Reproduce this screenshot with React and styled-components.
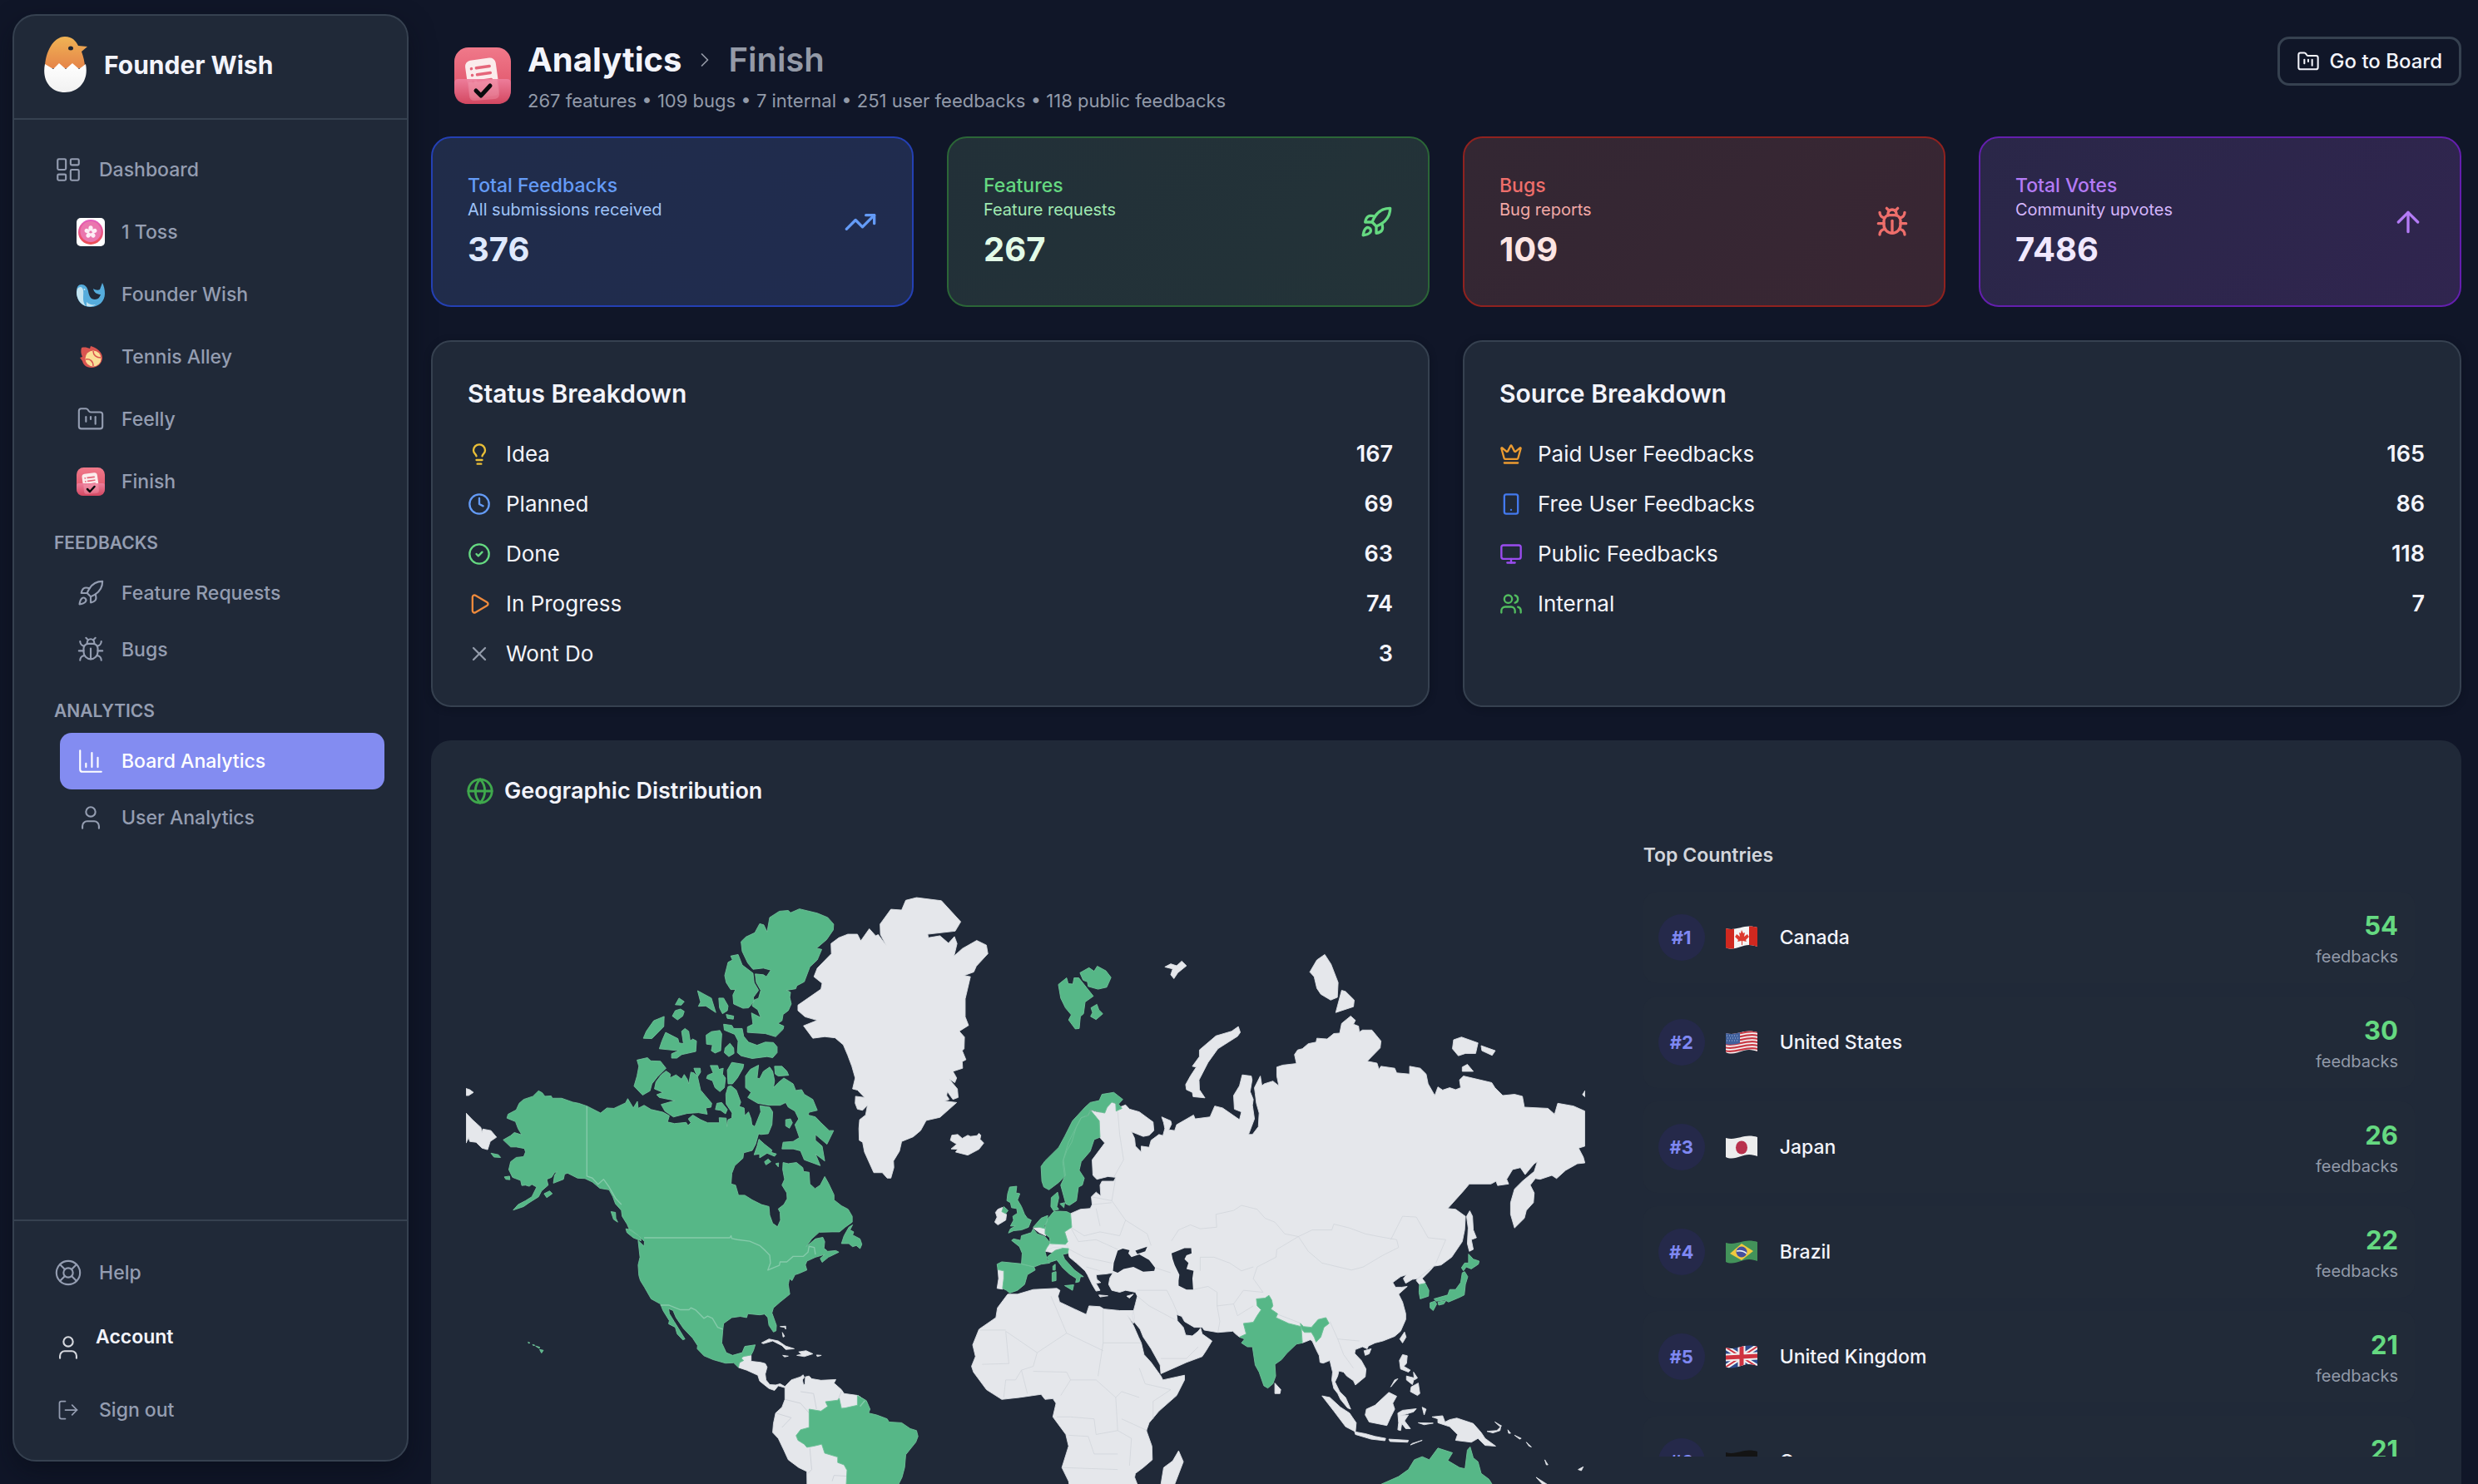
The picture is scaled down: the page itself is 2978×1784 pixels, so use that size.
import React from "react";
import styled, { createGlobalStyle } from "styled-components";
import {
  LayoutDashboard, FolderKanban, Rocket, Bug, ChartColumn, User, LifeBuoy, LogOut,
  ChevronRight, TrendingUp, ArrowUp, Lightbulb, Clock, CircleCheck, Play, X, Crown,
  Smartphone, Monitor, Users, Globe,
} from "lucide-react";

const Global = createGlobalStyle`
  *, *::before, *::after { box-sizing: border-box; }
  body {
    margin: 0;
    background: #101628;
    color: #f3f4fb;
    font-family: Inter, "Liberation Sans", sans-serif;
    font-size: 24px;
    overflow: hidden;
  }
  h1, h2, h3, p, ul, ol, dl, dd { margin: 0; padding: 0; }
  ul, ol { list-style: none; }
  a { color: inherit; text-decoration: none; }
  svg { display: block; flex: none; }
`;

/* ---------- shell ---------- */
const Shell = styled.div`
  display: flex;
  gap: 27px;
  height: 100vh;
  padding: 17px 20px 0 15px;
  overflow: hidden;
`;
const Sidebar = styled.aside`
  display: flex;
  flex-direction: column;
  flex: none;
  width: 476px;
  height: calc(100vh - 44px);
  border: 2px solid #364150;
  border-radius: 28px;
  background: #202938;
  box-shadow: 0 12px 30px rgba(8, 12, 22, 0.5);
`;
const Brand = styled.div`
  display: flex;
  align-items: center;
  gap: 18px;
  height: 125px;
  flex: none;
  padding: 0 0 5px 34px;
  border-bottom: 2px solid #364150;
  font-size: 30px;
  font-weight: 700;
`;
const Nav = styled.nav`
  flex: 1;
  padding: 26px 27px 0 28px;
`;
const NavList = styled.ul`
  display: flex;
  flex-direction: column;
  gap: ${(p) => (p.$tight ? 0 : 7)}px;
`;
const NavLink = styled.a`
  display: flex;
  align-items: center;
  gap: 20px;
  height: 68px;
  margin-left: ${(p) => (p.$sub ? 27 : 0)}px;
  padding-left: 20px;
  border-radius: 14px;
  font-weight: 500;
  font-size: 23px;
  color: ${(p) => (p.$active ? "#ffffff" : "#949db1")};
  background: ${(p) => (p.$active ? "#838cf1" : "transparent")};
`;
const IconSlot = styled.span`
  display: flex;
  align-items: center;
  justify-content: center;
  width: 34px;
  height: 34px;
  flex: none;
`;
const GroupLabel = styled.h3`
  margin: 27px 0 13px 20px;
  line-height: 26px;
  font-size: 21px;
  font-weight: 600;
  color: #949db1;
`;
const Footer = styled.div`
  flex: none;
  padding: 28px 27px 26px 28px;
  border-top: 2px solid #364150;
`;
const Account = styled.a`
  display: flex;
  align-items: center;
  gap: 16px;
  height: 97px;
  padding: 15px 0 0 20px;
  color: #d6d8de;
`;
const AccountName = styled.span`
  height: 58px;
  line-height: 32px;
  font-size: 23px;
  font-weight: 600;
  color: #f3f4fb;
`;

/* ---------- main ---------- */
const Main = styled.main`
  flex: 1;
  min-width: 0;
  display: flex;
  flex-direction: column;
  gap: 40px;
`;
const Header = styled.header`
  display: flex;
  align-items: flex-start;
  height: 107px;
  flex: none;
  padding: 27px 0 0 28px;
`;
const HeaderLogo = styled.div`
  padding-top: 13px;
  margin-right: 20px;
`;
const HeaderText = styled.div`
  flex: 1;
`;
const Crumbs = styled.h1`
  display: flex;
  align-items: center;
  gap: 14px;
  line-height: 56px;
  font-size: 40px;
  font-weight: 700;
`;
const CrumbCurrent = styled.span`
  font-weight: 600;
  color: #949aa7;
`;
const Summary = styled.p`
  line-height: 42px;
  font-size: 22px;
  color: #929aa9;
`;
const BoardButton = styled.button`
  display: flex;
  align-items: center;
  gap: 12px;
  height: 59px;
  padding: 0 20px;
  border: 3px solid #364150;
  border-radius: 14px;
  background: transparent;
  color: #f3f4fb;
  font: 500 24px Inter, "Liberation Sans", sans-serif;
`;
const StatGrid = styled.section`
  display: grid;
  grid-template-columns: repeat(4, 1fr);
  gap: 40px;
`;
const tones = {
  blue: { line: "#2440b4", from: "#202c49", to: "#202c50", title: "#649bf6", sub: "#9fc3f8", num: "#dfe9fd" },
  green: { line: "#2b6637", from: "#223038", to: "#233338", title: "#65d981", sub: "#a0eab2", num: "#e2fbe7" },
  red: { line: "#90221f", from: "#332733", to: "#392633", title: "#ee6e6b", sub: "#f2a9a6", num: "#fce5e3" },
  purple: { line: "#641fae", from: "#2a2748", to: "#30254f", title: "#b47bf6", sub: "#d4b5fb", num: "#f1e8fe" },
};
const StatCard = styled.article`
  display: flex;
  align-items: center;
  justify-content: space-between;
  height: 205px;
  padding: 0 42px;
  border: 2px solid ${(p) => tones[p.$tone].line};
  border-radius: 24px;
  background: linear-gradient(135deg, ${(p) => tones[p.$tone].from}, ${(p) => tones[p.$tone].to});
  color: ${(p) => tones[p.$tone].title};
`;
const StatText = styled.div`
  padding-top: 8px;
`;
const StatTitle = styled.h2`
  line-height: 32px;
  font-size: 23px;
  font-weight: 500;
`;
const StatSub = styled.p`
  line-height: 27px;
  font-size: 20px;
  color: ${(p) => tones[p.$tone].sub};
`;
const StatNumber = styled.p`
  line-height: 68px;
  font-size: 40px;
  font-weight: 700;
  color: ${(p) => tones[p.$tone].num};
`;
const TwoCol = styled.section`
  display: grid;
  grid-template-columns: repeat(2, 1fr);
  gap: 40px;
`;
const Panel = styled.article`
  padding: 42px;
  border: 2px solid #364150;
  border-radius: 24px;
  background: #202938;
  box-shadow: 0 2px 8px rgba(8, 12, 22, 0.4);
`;
const PanelTitle = styled.h2`
  line-height: 40px;
  margin-bottom: 33px;
  font-size: 30px;
  font-weight: 600;
`;
const Rows = styled.dl`
  display: flex;
  flex-direction: column;
  gap: 20px;
`;
const Row = styled.div`
  display: flex;
  align-items: center;
  gap: 18px;
  line-height: 40px;
  height: 40px;
  font-size: 27px;
  color: ${(p) => p.$color};
`;
const RowLabel = styled.dt`
  flex: 1;
  font-size: 26px;
  color: #f3f4fb;
`;
const RowValue = styled.dd`
  font-weight: 600;
  color: #f3f4fb;
`;
const GeoPanel = styled.section`
  flex: none;
  padding: 42px;
  border-radius: 24px;
  background: #202938;
`;
const GeoTitle = styled.h2`
  display: flex;
  align-items: center;
  gap: 12px;
  line-height: 38px;
  margin-bottom: 40px;
  font-size: 27px;
  font-weight: 600;
`;
const GeoGrid = styled.div`
  display: grid;
  grid-template-columns: 10fr 7fr;
  gap: 70px;
`;
const MapSvg = styled.svg`
  width: 100%;
  height: auto;
`;
const CountriesTitle = styled.h3`
  line-height: 36px;
  margin-bottom: 26px;
  font-size: 23px;
  font-weight: 600;
  color: #d2d5db;
`;
const CountryList = styled.ol`
  display: flex;
  flex-direction: column;
  gap: 16px;
  height: 679px;
  padding-right: 14px;
  overflow: hidden;
`;
const Country = styled.li`
  display: flex;
  align-items: center;
  flex: none;
  height: 110px;
  padding: 0 20px 0 18px;
  border-radius: 16px;
  background: #212a38;
`;
const Rank = styled.span`
  display: flex;
  align-items: center;
  justify-content: center;
  width: 56px;
  height: 56px;
  margin-right: 24px;
  border-radius: 50%;
  background: #25294a;
  font-size: 22px;
  font-weight: 700;
  color: #7f88f2;
`;
const CountryName = styled.span`
  flex: 1;
  margin-left: 26px;
  font-size: 23px;
  font-weight: 500;
`;
const Tally = styled.span`
  display: flex;
  flex-direction: column;
  padding-top: 6px;
  text-align: right;
`;
const TallyNumber = styled.strong`
  line-height: 40px;
  font-size: 31px;
  font-weight: 700;
  color: #65d981;
`;
const TallyUnit = styled.span`
  line-height: 34px;
  font-size: 20px;
  color: #929aa9;
`;

/* ---------- logos ---------- */
const EggLogo = () => (
  <svg width="56" height="70" viewBox="0 0 56 70" aria-hidden="true">
    <defs>
      <linearGradient id="chick" x1="0" y1="0" x2="0" y2="1">
        <stop offset="0" stopColor="#f0b354" />
        <stop offset="1" stopColor="#e5854a" />
      </linearGradient>
      <linearGradient id="shell" x1="0" y1="0" x2="0" y2="1">
        <stop offset="0" stopColor="#ffffff" />
        <stop offset="1" stopColor="#f1f1f1" />
      </linearGradient>
    </defs>
    <path d="M27 1C36 1 40 6 43 12l11 1-7 6c2 6 4 12 4 20H3C3 20 13 1 27 1Z" fill="url(#chick)" />
    <path d="M3 34l10 6 7-7 8 7 8-7 8 7 8-6c4 20-8 34-25 34S-1 54 3 34Z" fill="url(#shell)" />
    <ellipse cx="34" cy="15" rx="3" ry="2.5" fill="#1f2430" />
  </svg>
);
const FinishLogo = ({ size }) => (
  <svg width={size} height={size} viewBox="0 0 68 68" aria-hidden="true">
    <defs>
      <linearGradient id="fin" x1="0" y1="0" x2="0" y2="1">
        <stop offset="0" stopColor="#f0798a" />
        <stop offset="1" stopColor="#dc4c63" />
      </linearGradient>
      <linearGradient id="pocket" x1="0" y1="0" x2="0" y2="1">
        <stop offset="0" stopColor="#ee7f9d" />
        <stop offset="1" stopColor="#d24760" />
      </linearGradient>
    </defs>
    <rect width="68" height="68" rx="17" fill="url(#fin)" />
    <g transform="rotate(-8 33 36)">
      <rect x="15" y="14" width="37" height="46" rx="7" fill="#fbecec" />
      <g stroke="#e5667a" strokeWidth="3.500" strokeLinecap="round">
        <path d="M22 24h.1M28 24h16M22 32h.1M28 32h16M22 40h.1M28 40h16" />
      </g>
    </g>
    <path d="M0 43q0-5 5-5h58q5 0 5 5v8q0 17-17 17H17Q0 68 0 51Z" fill="url(#pocket)" opacity="0.93" />
    <path d="M17 42l34-4 3 18q0 5-5 6l-25 2q-5 0-6-5Z" fill="#f5a3b6" opacity="0.35" />
    <path d="M26 52l6 6 11-12" fill="none" stroke="#0b0b0d" strokeWidth="5" strokeLinecap="round" strokeLinejoin="round" />
  </svg>
);
const TossLogo = () => (
  <svg width="34" height="34" viewBox="0 0 34 34" aria-hidden="true">
    <defs>
      <linearGradient id="toss" x1="0" y1="0" x2="0" y2="1">
        <stop offset="0" stopColor="#e35fc0" />
        <stop offset="1" stopColor="#ef4d50" />
      </linearGradient>
    </defs>
    <rect width="34" height="34" rx="5" fill="#fff" />
    <circle cx="17" cy="17" r="15" fill="url(#toss)" />
    <circle cx="17" cy="16.500" r="12.500" fill="#ea76ae" />
    <g fill="#fdeef6">
      {[0, 72, 144, 216, 288].map((a) => (
        <ellipse key={a} cx="17" cy="12.500" rx="2.600" ry="3.200" transform={`rotate(${a} 17 17)`} />
      ))}
    </g>
    <circle cx="17" cy="17" r="1.300" fill="#ea76ae" />
  </svg>
);
const WhaleLogo = () => (
  <svg width="34" height="34" viewBox="0 0 34 34" aria-hidden="true">
    <path d="M6 5c4 0 7 3 8 8 1 6 3 10 8 10 4 0 6-3 7-6-4 0-8-2-9-7 3 2 6 2 8 1 1-3 2-5 3-8 2 4 3 8 3 13 0 9-7 16-17 16C7 32 0 25 0 14 0 8 2 5 6 5Z" fill="#55acdc" />
    <path d="M1 10c3-3 6-3 7 2 1 6-2 12 3 19C4 28 0 22 0 14ZM12 26c3 3 7 4 11 3-2 2-6 3-11 2Z" fill="#c4e4f0" />
    <circle cx="9.500" cy="11" r="1" fill="#c4e4f0" />
  </svg>
);
const TennisLogo = () => (
  <svg width="34" height="34" viewBox="0 0 34 34" aria-hidden="true">
    <path d="M6 6c4-1 7 0 10 1l1-3c8 2 14 8 14 14 0 7-6 12-13 12S8 26 7 22l-3-4 3-1C5 13 5 9 6 6Z" fill="#da5550" />
    <circle cx="20" cy="19" r="9.500" fill="#fbdf97" />
    <path d="M20 10c0 5 4 8 9 8M11 20c5-1 9 2 9 8" fill="none" stroke="#da5550" strokeWidth="1.500" />
  </svg>
);

/* ---------- flags ---------- */
const flagArt = {
  ca: (
    <>
      <path fill="#f4f4f4" d="M0 0h40v30H0z" />
      <path fill="#d0281f" d="M0 0h11v30H0zM29 0h11v30H29z" />
      <path fill="#dd3a2e" d="M20 5l2 4 2-1-1 5 4-3 1 2 1 1-4 4 1 2-5-1v5h-1v-5l-5 1 1-2-4-4 1-1 1-2 4 3-1-5 2 1z" />
    </>
  ),
  us: (
    <>
      <path fill="#f4f4f4" d="M0 0h40v30H0z" />
      <path fill="none" stroke="#c93a45" strokeWidth="2.200" d="M0 4c13 4 24-6 40-2M0 8c13 4 24-6 40-2M0 12c13 4 24-6 40-2M0 16c13 4 24-6 40-2M0 20c13 4 24-6 40-2M0 24c13 4 24-6 40-2M0 28c13 4 24-6 40-2" />
      <path fill="#40609c" d="M0 2c7 2 12 1 18-1v14c-6 2-11 2-18 1z" />
      <path stroke="#a9b9d8" strokeWidth="1" strokeDasharray="1 2" d="M2 6h15M3 9h14M2 12h15" />
    </>
  ),
  jp: (
    <>
      <path fill="#ededed" d="M0 0h40v30H0z" />
      <ellipse cx="20" cy="14.500" rx="7" ry="8" fill="#b8314c" />
    </>
  ),
  br: (
    <>
      <path fill="#43935a" d="M0 0h40v30H0z" />
      <path fill="#f0c93f" d="M6 16L20 4l14 9-14 11z" />
      <circle cx="20" cy="14" r="6.500" fill="#464f9e" />
      <path d="M14 13c5-1 9 0 12 3" fill="none" stroke="#e8ecf0" strokeWidth="1.500" />
    </>
  ),
  gb: (
    <>
      <path fill="#2d4a8c" d="M0 0h40v30H0z" />
      <path stroke="#f1f1f1" strokeWidth="6" d="M0 2l40 25M0 27L40 1" />
      <path stroke="#cf3340" strokeWidth="2" d="M0 2l40 25M0 27L40 1" />
      <path stroke="#f1f1f1" strokeWidth="9" d="M20 0v30M0 15l40-2" />
      <path stroke="#cf3340" strokeWidth="5" d="M20 0v30M0 15l40-2" />
    </>
  ),
  de: (
    <>
      <path fill="#141414" d="M0 0h40v11H0z" />
      <path fill="#cf2b2b" d="M0 11h40v9H0z" />
      <path fill="#f0c93f" d="M0 20h40v10H0z" />
    </>
  ),
};
const Flag = ({ code }) => (
  <svg width="40" height="28" viewBox="0 0 40 28" role="img" aria-label={code}>
    <clipPath id={`wave-${code}`}>
      <path d="M1 3C12 6 20 .5 29 .5c4 0 7 .5 10 1.500V25c-3-1-6-2-10-2-8 0-13 4.500-21 4.500-3 0-5-.5-7-1.500Z" />
    </clipPath>
    <g clipPath={`url(#wave-${code})`}>{flagArt[code]}</g>
  </svg>
);

/* ---------- world map: west and east sheets share one canvas ---------- */
const westLand = `
M1228,69L1257,62 1324,70 1376,124 1361,148 1287,156 1289,165 1320,160 1343,179 1359,162 1366,180 1358,212 1380,193 1419,172 1445,184 1449,206 1418,238 1411,253 1385,262 1402,265 1388,322 1388,368 1397,390 1372,405 1386,420 1385,450 1380,455 1390,478 1380,483 1381,500 1355,508 1365,525 1360,537 1345,528 1367,553 1369,575 1355,580 1340,560 1338,570 1345,580 1332,584 1365,588 1345,605 1320,626 1283,634 1268,660 1248,676 1217,688 1211,713 1195,738 1196,755 1188,782 1178,782 1165,768 1142,768 1117,715 1112,690 1103,685 1102,655 1104,632 1120,620 1125,595 1112,608 1098,605 1092,590 1093,572 1117,575 1098,556 1085,553 1092,525 1083,495 1072,467 1060,440 1038,422 1010,419 978,423 953,391 990,377 957,368 938,352 938,338 1000,297 1003,282 981,265 990,243 1028,206 1027,180 1048,165 1072,156 1098,156 1107,173 1130,142 1147,160 1154,157 1175,184 1160,157 1159,130 1188,92 1217,94Z
M1352,672L1368,670 1380,680 1395,672 1402,675 1420,673 1425,667 1430,672 1428,682 1438,692 1425,708 1395,723 1362,715 1368,708 1350,707 1365,695 1348,685Z
M45,615L62,632 85,652 88,665 90,656 112,660 127,677 110,688 103,709 88,705 72,690 55,688 52,678 45,692Z
M45,552L55,555 65,562 52,570 45,570Z
M786,1243L793,1240 812,1237 812,1252 838,1255 850,1258 855,1267 850,1285 852,1300 862,1312 878,1313 890,1310 903,1317 920,1300 945,1292 952,1287 955,1293 950,1300 953,1313 957,1310 958,1292 968,1290 975,1297 1000,1301 1040,1299 1035,1308 1055,1325 1062,1335 1100,1340 1122,1355 1130,1400 1068,1500 1080,1620 963,1620 962,1535 940,1525 912,1505 900,1480 885,1450 870,1435 872,1412 878,1385 895,1370 903,1350 903,1320 885,1315 875,1327 860,1322 835,1303 830,1288 800,1275 778,1268Z
M840,1205L860,1195 885,1200 905,1213 928,1220 905,1222 895,1212 870,1200 845,1207Z
M940,1228L960,1225 978,1233 955,1240 935,1237 948,1234Z
M897,1237L912,1239 902,1241Z M988,1236L1001,1237 990,1240Z
M890,1163L905,1162 905,1170 902,1165Z M896,1178L902,1188 898,1190Z`;
const westActive = `
M240,558L250,563 257,572 274,571 277,577 302,577 332,587 348,590 370,597 407,615 424,602 443,603 474,589 480,578 495,602 506,585 508,603 524,595 543,606 575,613 592,622 587,638 606,642 637,639 642,647 650,640 643,630 655,620 676,632 695,640 727,640 726,627 745,628 747,650 750,632 760,628 761,615 745,592 744,567 750,547 758,545 772,556 784,587 780,598 793,602 795,622 805,612 812,630 814,645 822,650 838,612 836,596 862,600 870,612 868,645 858,668 838,670 832,668 824,695 815,711 792,717 790,731 768,750 760,770 758,797 770,800 778,826 795,826 815,838 840,850 860,855 862,877 870,898 883,907 891,890 890,870 885,861 900,850 909,835 908,820 895,800 902,785 897,760 898,742 912,745 934,742 951,755 953,765 968,767 970,797 984,809 998,800 1010,778 1020,795 1035,825 1035,838 1055,853 1073,862 1084,880 1084,895 1065,908 1050,920 1030,920 995,921 975,938 960,958 985,938 1005,934 1010,945 1008,962 1018,970 1040,968 1048,972 1020,985 1003,998 998,988 1010,978 985,985 962,995 958,1005 962,1018 940,1027 930,1030 922,1045 915,1040 912,1055 916,1080 890,1100 872,1115 868,1128 880,1160 879,1174 872,1177 860,1160 857,1140 848,1131 835,1133 803,1130 800,1140 783,1137 760,1140 738,1155 736,1170 733,1205 745,1230 762,1237 788,1230 795,1214 823,1210 818,1225 812,1236 790,1240 786,1245 792,1250 780,1256 778,1268 765,1256 743,1257 710,1248 685,1238 667,1220 668,1212 655,1193 630,1168 610,1140 602,1122 590,1117 592,1130 605,1150 618,1170 634,1195 628,1197 613,1182 608,1165 590,1156 592,1148 575,1122 568,1105 543,1092 525,1062 514,1045 510,1032 508,1005 513,985 508,942 524,957 525,945 510,930 485,915 478,900 465,880 463,865 447,848 440,830 430,812 405,808 385,792 365,783 345,782 318,769 310,772 307,785 280,795 283,775 290,765 283,768 275,780 262,785 266,800 248,815 240,830 215,845 200,855 172,864 185,850 205,840 222,830 235,805 222,798 215,803 205,800 195,801 192,788 170,780 160,760 165,740 180,729 200,727 205,715 202,706 180,702 165,702 145,684 165,673 175,665 195,671 185,655 178,637 155,628 158,618 180,607 188,590 200,580 225,572Z
M1085,902L1078,915 1088,920 1085,928 1105,938 1110,952 1105,963 1095,955 1085,958 1075,950 1055,950 1062,930 1075,908Z
M785,175L798,163 822,152 835,129 846,132 855,150 862,113 888,97 912,95 918,101 942,91 990,102 1018,113 1034,130 1033,145 1015,170 988,192 1002,195 990,222 970,240 955,278 935,288 932,296 907,300 918,305 916,318 920,335 912,352 898,362 895,378 884,385 900,392 898,400 878,419 850,411 802,408 802,394 817,387 813,358 838,370 830,350 815,340 820,325 832,320 838,300 826,280 823,258 845,260 853,265 865,248 845,243 817,246 803,230 788,200Z
M757,212L777,208 788,235 817,256 820,280 832,300 818,318 820,328 805,345 790,346 765,335 763,312 770,298 757,298 745,280 741,262 750,228 762,222Z
M668,301L705,320 717,357 690,340 670,341 676,330Z
M725,320L738,320 750,340 748,352 735,360 727,345Z
M745,362L765,366 764,374 748,372Z
M618,320L632,329 624,338 608,337Z
M608,352L622,348 632,354 628,366 614,376 600,366Z
M578,367L577,393 545,424 522,423 530,405 550,378Z
M582,408L615,424 618,435 630,437 625,405 634,398 644,405 648,430 655,425 665,430 663,457 625,465 612,474 598,474 598,463 617,455 565,450 572,430Z
M705,406L728,403 733,412 730,455 715,461 705,455 708,440 692,438 691,415Z
M738,387L760,390 765,398 788,398 792,418 805,433 828,441 850,433 872,434 882,445 882,460 870,473 855,470 815,475 785,468 775,460 777,430 768,413 740,402Z
M755,436L765,448 766,462 752,470 740,460 742,448Z
M505,479L533,473 542,481 568,482 583,500 560,522 545,540 540,558 520,569 497,546 505,520 510,495Z
M583,507L595,515 593,525 610,517 625,528 632,516 640,528 644,540 650,510 658,512 668,522 676,556 690,572 706,590 704,600 690,602 694,618 670,614 640,616 603,625 580,610 570,593 607,583 565,575 558,568 575,562 552,553 556,535 570,517Z
M658,500L675,500 676,510 668,522 662,510Z
M702,493L722,493 725,503 737,500 735,515 743,525 740,550 728,560 715,550 708,532 692,526 695,518 710,512Z
M760,485L792,490 790,500 775,525 762,540 750,540 748,505Z
M720,590L733,588 748,606 743,617 730,608 716,606Z
M797,520L810,503 832,492 828,525 835,527 845,508 862,497 870,508 875,532 872,550 885,537 900,525 925,540 932,557 948,555 955,567 978,580 990,608 968,613 965,620 985,625 1000,640 1022,660 1034,660 1016,695 985,670 985,685 1003,700 1010,738 985,720 998,750 955,735 945,712 925,707 895,707 898,690 925,688 942,678 930,645 940,630 930,610 912,600 905,588 890,595 860,595 830,590 803,575 812,562 797,550Z
M875,495L895,495 908,507 913,518 885,520 877,515Z
M905,632L918,630 923,640 915,654 905,648Z
M833,682L848,695 868,710 866,716 880,720 875,726 855,718 835,730 835,720 820,722 828,700Z
M848,740L858,733 865,740 852,748Z M878,745L886,743 885,753Z
M112,718L132,722 138,729 120,728Z M148,779L162,777 163,786 152,785Z M255,822L270,815 277,822 262,832Z
M475,912L490,915 515,935 516,943 495,935 478,922Z M435,868L447,870 448,885 453,895 442,888Z
M243,1222L253,1224 248,1231Z M232,1213L243,1216 242,1219Z M224,1209L230,1211 226,1212Z M212,1203L217,1205 213,1206Z
M968,1375L1000,1380 1018,1368 1012,1356 1045,1352 1049,1347 1055,1373 1065,1372 1098,1365 1098,1340 1122,1353 1132,1375 1128,1385 1150,1390 1178,1400 1183,1408 1217,1410 1240,1425 1257,1430 1261,1445 1255,1460 1228,1492 1225,1525 1218,1550 1205,1575 1180,1620 1075,1620 1068,1568 1070,1532 1062,1518 1045,1512 1045,1498 1010,1488 1002,1465 980,1470 962,1473 955,1465 938,1455 933,1443 945,1428 968,1422Z`;
const westBorders = `
M370,597L370,777 385,782 400,798 415,785 430,805 448,835 463,850
M524,935L755,935 758,930 760,937 775,940 808,944 835,955 850,968 862,980 864,1000 857,1018 888,1006 890,997 908,997 925,983 952,983 965,972 968,957 982,960 985,978
M568,1108L590,1108 622,1120 645,1120 650,1115 662,1120 685,1142 695,1136 708,1142 722,1165 736,1170
M1105,1368L1118,1353`;
const westFaint = `
M903,1350L945,1360 968,1385 M878,1385L920,1397 895,1422 M945,1330L980,1335 988,1375 M1055,1330L1045,1352 M970,1475L975,1530 965,1540 M1030,1560L1035,1545 1068,1547`;

const eastLand = `
M276,608L290,612 312,615 318,600 330,587 340,592 341,610 350,600 365,594 375,605 400,612 435,638 437,660 425,672 410,675 380,663 388,680 390,700 405,715 405,700 425,703 430,685 450,670 460,673 465,655 462,640 457,625 480,635 482,643 475,658 490,660 495,645 538,620 542,630 580,625 592,597 612,602 655,632 660,612 642,605 640,570 655,545 662,517 685,520 687,530 682,560 690,580 688,595 693,630 678,670 688,670 703,650 705,615 698,590 695,565 693,550 708,520 712,545 718,540 740,533 755,545 750,520 750,497 765,492 800,488 795,465 803,453 815,450 830,437 850,433 852,423 878,425 895,411 910,410 915,385 938,366 950,377 945,387 958,392 960,407 968,402 992,402 1015,430 1013,448 980,482 1005,487 1010,503 1015,495 1050,500 1055,512 1088,515 1088,495 1115,500 1130,515 1135,540 1152,570 1160,548 1172,556 1190,550 1205,555 1218,550 1215,530 1225,520 1297,537 1305,550 1325,570 1355,567 1375,572 1380,600 1440,603 1457,618 1465,590 1505,597 1534,610 1534,700 1518,705 1530,728 1534,743 1515,745 1485,762 1462,783 1450,775 1420,785 1408,783 1395,800 1405,820 1403,845 1385,865 1380,885 1355,910 1345,875 1345,845 1355,810 1375,790 1405,765 1413,740 1405,745 1382,773 1370,755 1350,760 1335,785 1340,797 1312,801 1308,790 1295,797 1240,797 1225,815 1185,860 1205,862 1230,880 1228,915 1222,945 1195,985 1168,1005 1150,1008 1140,1020 1120,1040 1128,1050 1120,1060 1113,1055 1105,1045 1108,1040 1095,1042 1078,1052 1072,1040 1080,1030 1065,1035 1045,1050 1052,1062 1068,1062 1082,1060 1060,1080 1070,1100 1078,1130 1078,1145 1065,1175 1050,1188 1020,1200 1000,1205 983,1213 980,1220 968,1215 950,1222 948,1232 965,1250 977,1272 975,1292 950,1313 945,1302 928,1290 920,1280 908,1277 905,1290 898,1305 910,1330 925,1345 938,1375 930,1372 912,1350 905,1335 895,1322 890,1300 892,1280 885,1250 868,1257 860,1255 858,1238 850,1222 840,1200 835,1197 815,1205 800,1200 760,1190 700,1190 655,1190 645,1182 638,1175 600,1178 565,1172 560,1165 540,1165 515,1150 508,1137 495,1132 497,1148 512,1165 518,1185 535,1187 550,1175 556,1167 560,1182 585,1200 570,1225 560,1240 520,1255 455,1284 453,1262 430,1220 410,1190 402,1170 386,1150 382,1135 390,1105 395,1085 390,1075 365,1070 350,1075 330,1070 322,1055 325,1038 333,1025 315,1028 290,1030 292,1042 302,1050 290,1052 300,1070 290,1072 280,1055 268,1030 262,1020 240,1000 222,985 218,968 205,960 180,960 160,970 160,958 173,945 212,950 215,935 210,918 225,908 225,873 250,862 275,860 280,850 278,830 290,818 302,828 300,800 305,790 335,790 340,780 320,778 292,785 282,775 280,735 312,692 300,678 298,635Z
M652,393L657,408 650,418 600,450 575,485 552,530 553,555 567,576 537,573 535,562 520,555 518,542 530,520 545,497 535,495 553,470 553,453 595,417 635,405Z
M465,240L480,232 495,237 508,225 520,237 498,255 488,270 480,260 485,245Z
M872,208L888,233 906,280 904,318 887,325 862,310 852,295 845,265 834,253 852,222Z
M915,300L925,303 947,325 945,342 900,357Z
M1200,427L1220,420 1262,435 1256,462 1230,462 1212,468 1197,450Z M1270,442L1306,455 1298,467 1272,455Z M1222,497L1235,490 1250,508 1222,508Z
M1241,866L1248,880 1250,915 1258,935 1245,940 1250,965 1240,970 1235,950 1237,910 1233,880Z
M1534,558L1528,568 1534,573Z
M40,1015L58,1018 52,1067 38,1065 42,1040Z
M40,862L52,857 50,868 62,875 60,890 40,902 32,895 38,882 34,870Z
M130,910L158,908 162,930 145,922Z
M160,958L185,952 215,953 220,962 190,965 178,973 162,970Z
M65,1080L90,1080 130,1068 190,1065 198,1070 193,1085 197,1100 235,1118 265,1132 272,1110 300,1112 310,1118 350,1122 385,1122 388,1140 385,1155 370,1135 385,1160 398,1190 405,1205 412,1235 430,1255 455,1290 460,1300 515,1288 515,1300 495,1340 450,1380 425,1410 418,1430 432,1470 433,1505 410,1525 390,1540 388,1550 395,1568 395,1620 230,1620 220,1560 203,1525 220,1470 213,1440 180,1395 188,1360 180,1348 160,1350 150,1337 95,1345 50,1350 11,1325 -22,1280 -27,1265 -17,1240 -24,1210 -8,1170 35,1140 39,1115Z
M500,1482L512,1510 490,1568 485,1620 455,1600 455,1568 462,1525 485,1508Z
M368,1085L385,1080 375,1090Z M297,1082L320,1084 300,1087Z
M745,1308L760,1325 758,1335 745,1335Z
M972,1225L990,1220 985,1233 975,1237Z M1075,1177L1079,1190 1070,1205 1063,1195Z
M1070,1235L1082,1238 1080,1258 1073,1265 1090,1275 1085,1280 1065,1272 1062,1250Z M1098,1280L1108,1295 1100,1300Z M1110,1308L1114,1335 1108,1340 1090,1330 1092,1318Z M1058,1297L1040,1318 1050,1300Z M1080,1290L1100,1295 1095,1312 1080,1300Z
M865,1341L885,1345 912,1370 935,1385 952,1410 950,1433 925,1420 895,1380Z
M948,1433L975,1438 1000,1445 1027,1450 1025,1456 990,1452 950,1440Z M1035,1452L1085,1455 1083,1460 1038,1458Z M1090,1467L1120,1455 1095,1463Z
M978,1375L1000,1365 1035,1332 1055,1342 1045,1360 1050,1375 1040,1395 1030,1417 985,1408 975,1390Z
M1058,1385L1070,1378 1105,1374 1098,1382 1065,1392 1085,1390 1075,1405 1090,1425 1078,1425 1068,1412 1065,1430 1058,1428 1060,1410Z
M1120,1370L1130,1375 1125,1390Z M1110,1410L1148,1411 1125,1415Z
M1145,1395L1172,1392 1178,1408 1190,1402 1208,1398 1250,1412 1270,1435 1280,1450 1307,1470 1280,1468 1262,1450 1245,1460 1205,1455 1210,1440 1190,1420 1160,1410 1160,1400Z
M1285,1432L1310,1430 1320,1420 1318,1430 1300,1436Z M1305,1408L1322,1418 1318,1420Z M1338,1428L1345,1437 1340,1437Z M1355,1442L1372,1450 1368,1452Z M1385,1460L1398,1472 1392,1470Z
M1432,1505L1440,1518 1436,1518Z M1410,1550L1438,1568 1430,1572Z M1517,1530L1530,1523 1525,1533Z`;
const seas = `
M345,968L358,963 375,967 372,975 380,985 400,978 425,992 440,1012 438,1020 410,1022 385,1010 360,1015 345,1025 333,1020 335,1000Z
M390,968L420,958 415,970 395,977Z
M482,975L515,962 532,962 533,975 520,980 515,990 525,1000 520,1015 538,1020 535,1040 537,1068 520,1068 500,1058 500,1045 502,1030 490,1005 485,990Z`;
const eastActive = `
M194,285L215,268 219,283 231,284 234,268 246,268 283,315 262,330 258,360 250,367 247,398 237,399 220,376 227,363 212,345 200,320Z
M249,255L272,242 285,251 293,238 315,250 328,267 317,292 295,297 270,290 268,278 257,274Z
M277,345L292,336 297,350 307,360 290,375 276,367 281,357Z
M305,567L335,562 358,580 347,592 356,603 341,610 340,590 330,587 318,600 312,615 290,610 275,606 270,620 252,627 240,650 228,690 215,712 207,735 212,775 195,793 170,812 157,805 152,790 150,752 160,738 195,703 210,675 230,635 262,600 275,588 298,583Z
M276,608L298,635 300,677 285,683 275,713 252,740 247,762 260,782 255,800 245,805 240,840 222,852 213,848 200,800 210,778 205,740 213,712 220,690 240,650 252,627 270,622Z
M192,818L195,832 190,855 195,862 182,866 175,855 176,832Z M198,848L210,845 208,858Z
M182,868L195,867 215,868 225,873 228,908 210,920 218,945 212,952 173,950 172,935 160,925 162,900 168,885Z
M150,885L167,878 165,895 158,905 162,912 145,908 130,908Z
M130,912L140,925 160,932 173,948 165,960 160,970 165,990 172,1000 150,1003 132,1010 100,1003 102,975 95,958 75,942 80,938 98,942 100,930 125,922Z
M38,1003L50,997 100,1002 132,1010 135,1018 115,1030 108,1055 90,1070 70,1077 62,1070 52,1065 55,1040 55,1020 40,1017Z
M165,985L185,968 205,962 220,963 218,975 205,978 210,990 235,1018 258,1035 250,1035 247,1048 238,1050 240,1040 222,1028 205,1012 190,992 172,998Z M210,1058L233,1056 230,1070Z M178,1025L188,1022 188,1045 178,1047Z M180,1008L186,1003 186,1018 180,1018Z
M70,805L88,803 86,820 96,822 90,838 100,855 108,875 115,885 125,890 118,908 100,915 80,917 67,923 72,912 85,905 72,905 80,890 78,880 90,872 88,860 75,858 72,845 63,840 65,822Z
M55,855L66,865 60,873 50,868Z
M698,1092L720,1090 730,1083 737,1095 740,1110 735,1118 752,1130 748,1140 780,1155 812,1163 815,1205 800,1208 775,1232 762,1248 745,1260 747,1290 740,1310 727,1321 717,1315 705,1280 695,1262 688,1215 675,1215 660,1205 668,1195 655,1190 672,1182 665,1155 690,1152 700,1135 710,1120 700,1110Z
M810,1155L818,1163 838,1165 855,1145 875,1140 883,1155 870,1165 862,1190 850,1203 845,1190 838,1178 820,1178 812,1168Z
M1113,1055L1128,1052 1137,1070 1136,1085 1115,1092 1112,1075Z
M1238,977L1250,990 1265,995 1263,1003 1245,1015 1232,1010 1225,1020 1220,1012 1228,1000 1238,1000Z
M1228,1022L1236,1035 1230,1055 1227,1082 1215,1088 1187,1100 1178,1095 1155,1098 1150,1092 1185,1082 1190,1068 1205,1068 1218,1050 1222,1025Z
M1140,1102L1152,1098 1157,1105 1148,1122 1140,1115Z M1160,1100L1180,1097 1175,1105 1162,1108Z
M1015,1568L1060,1548 1085,1530 1100,1505 1120,1497 1138,1505 1160,1475 1197,1487 1185,1507 1215,1525 1229,1528 1235,1480 1242,1472 1250,1500 1262,1510 1270,1540 1290,1555 1298,1568 1298,1620 1015,1620Z`;
const eastFaint = `
M482,943L500,915 530,902 555,912 597,908 595,875 640,865 660,852 700,862 720,885 745,895 770,925 805,932 840,915 890,915 895,900 935,910 975,925 1010,932 1055,940 1060,960 1020,980 970,1010 940,1018 865,1000 830,970 805,932 750,965 748,985 700,1010 690,1040 715,1075
M1040,940L1070,880 1105,882 1135,935 1180,940 1155,1000 M345,610L350,670 360,735 335,780 M555,1020L555,985 590,985 630,1000 660,1020 690,1010
M537,1068L575,1060 598,1075 598,1110 605,1150 600,1178 M598,1110L640,1105 665,1070 715,1075 M640,1105L650,1135 690,1110
M60,1175L140,1230 215,1180 190,1120 175,1085 M308,1118L308,1205 405,1205 M308,1205L295,1290 M215,1180L308,1225 M-8,1172L60,1172 M60,1175L68,1258 0,1260
M140,1230L130,1265 100,1275 85,1300 60,1300 55,1345 M100,1275L115,1335 M130,1278L215,1280 225,1300 200,1340 M225,1300L290,1300 340,1345 355,1330 400,1345 M340,1345L345,1430 290,1440 285,1400 225,1395 190,1395
M400,1270L415,1310 480,1325 435,1355 435,1400 M220,1442L270,1445 285,1490 345,1490 M205,1525L345,1530 M355,1400L420,1430 M345,1430L380,1450 375,1520
M225,873L225,908 260,930 300,920 350,930 365,890 420,925 430,955 M225,908L245,945 290,940 345,965 M290,860L300,905 M340,780L330,840 365,890 M222,965L260,985 330,1000 M265,1010L300,1020
M440,1012L480,1025 M395,1070L470,1070 485,1100 500,1135 M395,1085L425,1110 490,1145 M455,1245L520,1245 550,1215 M885,1150L905,1195 960,1200 M905,1195L920,1235 945,1270 M748,1130L812,1155
M1108,1040L1150,1008 M278,830L330,840 M280,850L330,845`;

const WorldMap = () => (
  <MapSvg viewBox="0 0 1344 820" role="img" aria-label="Feedback by country">
    <g strokeWidth="2" strokeLinejoin="round">
      <g transform="translate(-20 40) scale(0.446429 0.468113)">
        <path d={westLand} fill="#e5e7eb" stroke="#dcdfe4" />
        <path d={westFaint} fill="none" stroke="#cdd1d8" />
        <path d={westActive} fill="#56b787" stroke="#6ec198" />
        <path d={westBorders} fill="none" stroke="#86cbab" strokeWidth="3" />
      </g>
      <g transform="translate(620 40) scale(0.471939 0.468112)">
        <path d={eastLand} fill="#e5e7eb" stroke="#dcdfe4" />
        <path d={eastFaint} fill="none" stroke="#cfd3d9" strokeWidth="1.500" />
        <path d={seas} fill="#202938" />
        <path d={eastActive} fill="#56b787" stroke="#6ec198" />
      </g>
    </g>
  </MapSvg>
);

/* ---------- data ---------- */
const boards = [
  ["1 Toss", <TossLogo />],
  ["Founder Wish", <WhaleLogo />],
  ["Tennis Alley", <TennisLogo />],
  ["Feelly", <FolderKanban size={34} strokeWidth={1.5} />],
  ["Finish", <FinishLogo size={34} />],
];
const stats = [
  ["blue", "Total Feedbacks", "All submissions received", "376", TrendingUp],
  ["green", "Features", "Feature requests", "267", Rocket],
  ["red", "Bugs", "Bug reports", "109", Bug],
  ["purple", "Total Votes", "Community upvotes", "7486", ArrowUp],
];
const statuses = [
  ["Idea", "167", Lightbulb, "#eabf37"],
  ["Planned", "69", Clock, "#649bf6"],
  ["Done", "63", CircleCheck, "#65d981"],
  ["In Progress", "74", Play, "#ee8a3c"],
  ["Wont Do", "3", X, "#929aa9"],
];
const sources = [
  ["Paid User Feedbacks", "165", Crown, "#eb9b31"],
  ["Free User Feedbacks", "86", Smartphone, "#4379ee"],
  ["Public Feedbacks", "118", Monitor, "#9b4cf0"],
  ["Internal", "7", Users, "#52bd5f"],
];
const countries = [
  ["ca", "Canada", 54],
  ["us", "United States", 30],
  ["jp", "Japan", 26],
  ["br", "Brazil", 22],
  ["gb", "United Kingdom", 21],
  ["de", "Germany", 21],
];

const NavItem = ({ icon, label, sub, active }) => (
  <li>
    <NavLink href="#" $sub={sub} $active={active}>
      <IconSlot>{icon}</IconSlot>
      {label}
    </NavLink>
  </li>
);
const Breakdown = ({ title, rows }) => (
  <Panel>
    <PanelTitle>{title}</PanelTitle>
    <Rows>
      {rows.map(([label, value, Icon, color]) => (
        <Row key={label} $color={color}>
          <Icon size={28} />
          <RowLabel>{label}</RowLabel>
          <RowValue>{value}</RowValue>
        </Row>
      ))}
    </Rows>
  </Panel>
);

export default function App() {
  return (
    <Shell>
      <Global />
      <Sidebar>
        <Brand>
          <EggLogo />
          Founder Wish
        </Brand>
        <Nav>
          <NavList>
            <NavItem icon={<LayoutDashboard size={34} strokeWidth={1.5} />} label="Dashboard" />
            {boards.map(([label, icon]) => (
              <NavItem key={label} icon={icon} label={label} sub />
            ))}
          </NavList>
          <GroupLabel>FEEDBACKS</GroupLabel>
          <NavList $tight>
            <NavItem icon={<Rocket size={34} strokeWidth={1.5} />} label="Feature Requests" sub />
            <NavItem icon={<Bug size={34} strokeWidth={1.5} />} label="Bugs" sub />
          </NavList>
          <GroupLabel>ANALYTICS</GroupLabel>
          <NavList $tight>
            <NavItem icon={<ChartColumn size={34} strokeWidth={1.5} />} label="Board Analytics" sub active />
            <NavItem icon={<User size={34} strokeWidth={1.5} />} label="User Analytics" sub />
          </NavList>
        </Nav>
        <Footer>
          <NavLink href="#">
            <IconSlot><LifeBuoy size={34} strokeWidth={1.5} /></IconSlot>
            Help
          </NavLink>
          <Account href="#">
            <User size={34} strokeWidth={1.5} />
            <AccountName>Account</AccountName>
          </Account>
          <NavLink href="#">
            <IconSlot><LogOut size={28} strokeWidth={1.5} /></IconSlot>
            Sign out
          </NavLink>
        </Footer>
      </Sidebar>
      <Main>
        <Header>
          <HeaderLogo><FinishLogo size={68} /></HeaderLogo>
          <HeaderText>
            <Crumbs>
              Analytics
              <ChevronRight size={28} strokeWidth={1.5} color="#949aa7" />
              <CrumbCurrent>Finish</CrumbCurrent>
            </Crumbs>
            <Summary>267 features • 109 bugs • 7 internal • 251 user feedbacks • 118 public feedbacks</Summary>
          </HeaderText>
          <BoardButton type="button">
            <FolderKanban size={28} strokeWidth={1.75} />
            Go to Board
          </BoardButton>
        </Header>
        <StatGrid>
          {stats.map(([tone, title, sub, num, Icon]) => (
            <StatCard key={title} $tone={tone}>
              <StatText>
                <StatTitle>{title}</StatTitle>
                <StatSub $tone={tone}>{sub}</StatSub>
                <StatNumber $tone={tone}>{num}</StatNumber>
              </StatText>
              <Icon size={40} />
            </StatCard>
          ))}
        </StatGrid>
        <TwoCol>
          <Breakdown title="Status Breakdown" rows={statuses} />
          <Breakdown title="Source Breakdown" rows={sources} />
        </TwoCol>
        <GeoPanel>
          <GeoTitle>
            <Globe size={34} color="#3fa84c" />
            Geographic Distribution
          </GeoTitle>
          <GeoGrid>
            <WorldMap />
            <div>
              <CountriesTitle>Top Countries</CountriesTitle>
              <CountryList>
                {countries.map(([code, name, count], i) => (
                  <Country key={code}>
                    <Rank>#{i + 1}</Rank>
                    <Flag code={code} />
                    <CountryName>{name}</CountryName>
                    <Tally>
                      <TallyNumber>{count}</TallyNumber>
                      <TallyUnit>feedbacks</TallyUnit>
                    </Tally>
                  </Country>
                ))}
              </CountryList>
            </div>
          </GeoGrid>
        </GeoPanel>
      </Main>
    </Shell>
  );
}
